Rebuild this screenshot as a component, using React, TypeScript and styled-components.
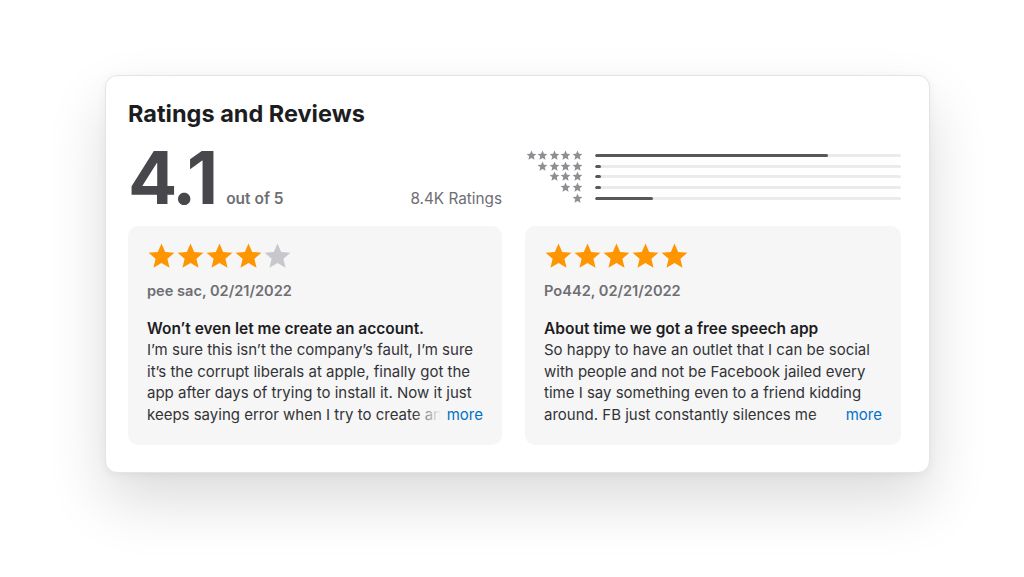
import React from "react";
import styled, { createGlobalStyle } from "styled-components";

const Global = createGlobalStyle`
  html, body { margin: 0; padding: 0; background: #ffffff; }
  body { font-family: Inter, "Noto Sans", "Liberation Sans", sans-serif; -webkit-font-smoothing: antialiased; }
`;

const Page = styled.div`
  width: 1024px;
  height: 577px;
  box-sizing: border-box;
  padding: 75px 0 0 105px;
  background: #ffffff;
  overflow: hidden;
`;

const Card = styled.section`
  width: 825px;
  height: 398px;
  box-sizing: border-box;
  padding: 24px 29px 0 22px;
  background: #ffffff;
  border: 1px solid #e4e4e4;
  border-radius: 12px;
  box-shadow: 0 28px 60px rgba(0, 0, 0, 0.14), 0 2px 10px rgba(0, 0, 0, 0.05);
  display: flex;
  flex-direction: column;
`;

const Title = styled.h2`
  margin: 0;
  font-size: 23.5px;
  line-height: 28px;
  font-weight: 700;
  color: #1d1d1f;
`;

const Grid = styled.div`
  display: grid;
  grid-template-columns: 374px 376px;
  column-gap: 23px;
`;

const Summary = styled(Grid)`
  margin-top: 13px;
  height: 85px;
`;

const ScoreBlock = styled.div`
  display: flex;
  align-items: baseline;
  height: 75px;
`;

const Score = styled.span`
  font-size: 73px;
  line-height: 73px;
  font-weight: 700;
  color: #48484c;
  letter-spacing: -3px;
`;

const OutOf = styled.span`
  margin-left: 11px;
  font-size: 15.5px;
  font-weight: 600;
  color: #6e6e73;
`;

const Count = styled.span`
  margin-left: auto;
  font-size: 15.3px;
  font-weight: 400;
  color: #6e6e73;
`;

const Histogram = styled.div`
  padding-top: 9px;
  display: flex;
  flex-direction: column;
`;

const HistRow = styled.div`
  display: flex;
  align-items: center;
  height: 10.7px;
`;

const HistStars = styled.div`
  width: 58px;
  display: flex;
  justify-content: flex-end;
  gap: 0.6px;
`;

const Track = styled.div`
  margin-left: 12px;
  flex: 1;
  height: 3px;
  border-radius: 2px;
  background: #ebebee;
  overflow: hidden;
`;

const Fill = styled.div`
  height: 100%;
  border-radius: 2px;
  background: #58585c;
`;

const ReviewCard = styled.article`
  height: 219px;
  box-sizing: border-box;
  padding: 16px 19px 0 19px;
  background: #f6f6f6;
  border-radius: 10px;
`;

const StarRow = styled.div`
  display: flex;
  gap: 0px;
  height: 28px;
  align-items: center;
`;

const Author = styled.div`
  margin-top: 11px;
  font-size: 14.6px;
  line-height: 20px;
  font-weight: 600;
  color: #6e6e73;
`;

const ReviewTitle = styled.h3`
  margin: 17px 0 0 0;
  font-size: 15.5px;
  line-height: 21.4px;
  font-weight: 600;
  color: #1d1d1f;
`;

const BodyWrap = styled.div`
  position: relative;
  height: 85.6px;
  overflow: hidden;
`;

const Body = styled.p`
  margin: 0;
  font-size: 15px;
  line-height: 21.4px;
  font-weight: 400;
  color: #333336;
`;

const More = styled.span`
  position: absolute;
  right: 0;
  bottom: 0;
  height: 21.4px;
  line-height: 21.4px;
  font-size: 15px;
  color: #0070c9;
  padding-left: 34px;
  background: linear-gradient(to right, rgba(246, 246, 246, 0) 0, #f6f6f6 28px);
`;

const STAR_PATH =
  "M12 1.2l3.05 7.05 7.65.62-5.82 5 1.78 7.48L12 17.3l-6.66 4.05 1.78-7.48-5.82-5 7.65-.62z";

function Star({ size, color }: { size: number; color: string }) {
  return (
    <svg width={size} height={size} viewBox="0 0 24 24" aria-hidden>
      <path d={STAR_PATH} fill={color} />
    </svg>
  );
}

const histogram = [
  { stars: 5, pct: 76 },
  { stars: 4, pct: 2 },
  { stars: 3, pct: 2 },
  { stars: 2, pct: 2 },
  { stars: 1, pct: 19 },
];

const reviews = [
  {
    rating: 4,
    author: "pee sac, 02/21/2022",
    title: "Won’t even let me create an account.",
    body:
      "I’m sure this isn’t the company’s fault, I’m sure it’s the corrupt liberals at apple, finally got the app after days of trying to install it. Now it just keeps saying error when I try to create an account and it never works.",
  },
  {
    rating: 5,
    author: "Po442, 02/21/2022",
    title: "About time we got a free speech app",
    body:
      "So happy to have an outlet that I can be social with people and not be Facebook jailed every time I say something even to a friend kidding around. FB just constantly silences me whenever I say anything at all.",
  },
];

export default function App() {
  return (
    <Page>
      <Global />
      <Card>
        <Title>Ratings and Reviews</Title>
        <Summary>
          <ScoreBlock>
            <Score>4.1</Score>
            <OutOf>out of 5</OutOf>
            <Count>8.4K Ratings</Count>
          </ScoreBlock>
          <Histogram>
            {histogram.map((h) => (
              <HistRow key={h.stars}>
                <HistStars>
                  {Array.from({ length: h.stars }).map((_, i) => (
                    <Star key={i} size={11} color="#8e8e93" />
                  ))}
                </HistStars>
                <Track>
                  <Fill style={{ width: `${h.pct}%` }} />
                </Track>
              </HistRow>
            ))}
          </Histogram>
        </Summary>
        <Grid>
          {reviews.map((r) => (
            <ReviewCard key={r.author}>
              <StarRow>
                {Array.from({ length: 5 }).map((_, i) => (
                  <Star key={i} size={29} color={i < r.rating ? "#ff9500" : "#c7c7cc"} />
                ))}
              </StarRow>
              <Author>{r.author}</Author>
              <ReviewTitle>{r.title}</ReviewTitle>
              <BodyWrap>
                <Body>{r.body}</Body>
                <More>more</More>
              </BodyWrap>
            </ReviewCard>
          ))}
        </Grid>
      </Card>
    </Page>
  );
}
